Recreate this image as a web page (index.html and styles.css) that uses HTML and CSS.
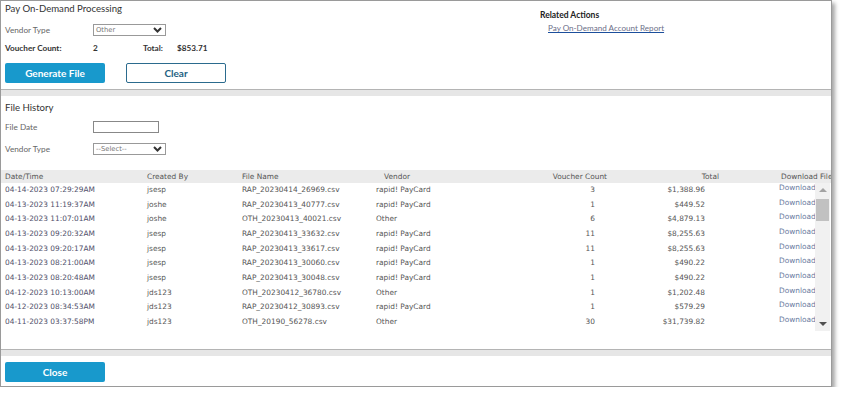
FILE: index.html
```html
<!DOCTYPE html>
<html lang="en">
<head>
  <meta charset="UTF-8">
  <title>Pay On-Demand Processing</title>
  <link rel="stylesheet" href="styles.css">
</head>
<body>

  <div class="dialog">

    <!-- Processing -->
    <section class="panel top">
      <div class="process">
        <h2 class="title">Pay On-Demand Processing</h2>
        <div class="field">
          <label>Vendor Type</label>
          <div class="select">
            <span>Other</span>
            <svg class="chev" width="9" height="6" viewBox="0 0 9 6"><path d="M1 1 L4.5 4.5 L8 1" fill="none" stroke="#333" stroke-width="2"/></svg>
          </div>
        </div>
        <div class="summary">
          <span class="sum-label">Voucher Count:</span>
          <span class="sum-count">2</span>
          <span class="sum-label total-label">Total:</span>
          <span class="sum-value">$853.71</span>
        </div>
        <div class="actions">
          <button class="btn primary">Generate File</button>
          <button class="btn outline">Clear</button>
        </div>
      </div>
      <div class="related">
        <h3>Related Actions</h3>
        <a href="#">Pay On-Demand Account Report</a>
      </div>
    </section>

    <div class="divider"></div>

    <!-- File History -->
    <section class="panel history">
      <h2 class="title">File History</h2>
      <div class="field">
        <label>File Date</label>
        <div class="input"></div>
      </div>
      <div class="field">
        <label>Vendor Type</label>
        <div class="select">
          <span>--Select--</span>
          <svg class="chev" width="9" height="6" viewBox="0 0 9 6"><path d="M1 1 L4.5 4.5 L8 1" fill="none" stroke="#333" stroke-width="2"/></svg>
        </div>
      </div>

      <div class="grid-head">
        <div class="c-date">Date/Time</div>
        <div class="c-user">Created By</div>
        <div class="c-file">File Name</div>
        <div class="c-vendor h-vendor">Vendor</div>
        <div class="c-count h-count">Voucher Count</div>
        <div class="c-total h-total">Total</div>
        <div class="c-dl h-dl">Download File</div>
      </div>

      <div class="grid-body">
        <div class="rows" id="rows"></div>
        <div class="scrollbar">
          <div class="arrow up"></div>
          <div class="thumb"></div>
          <div class="track"></div>
          <div class="arrow down"></div>
        </div>
      </div>
    </section>

    <div class="divider"></div>

    <footer class="footer">
      <button class="btn primary">Close</button>
    </footer>
  </div>

  <script>
    const files = [
      ['04-14-2023 07:29:29AM', 'jsesp', 'RAP_20230414_26969.csv', 'rapid! PayCard', 3, '$1,388.96'],
      ['04-13-2023 11:19:37AM', 'joshe', 'RAP_20230413_40777.csv', 'rapid! PayCard', 1, '$449.52'],
      ['04-13-2023 11:07:01AM', 'joshe', 'OTH_20230413_40021.csv', 'Other', 6, '$4,879.13'],
      ['04-13-2023 09:20:32AM', 'jsesp', 'RAP_20230413_33632.csv', 'rapid! PayCard', 11, '$8,255.63'],
      ['04-13-2023 09:20:17AM', 'jsesp', 'RAP_20230413_33617.csv', 'rapid! PayCard', 11, '$8,255.63'],
      ['04-13-2023 08:21:00AM', 'jsesp', 'RAP_20230413_30060.csv', 'rapid! PayCard', 1, '$490.22'],
      ['04-13-2023 08:20:48AM', 'jsesp', 'RAP_20230413_30048.csv', 'rapid! PayCard', 1, '$490.22'],
      ['04-12-2023 10:13:00AM', 'jds123', 'OTH_20230412_36780.csv', 'Other', 1, '$1,202.48'],
      ['04-12-2023 08:34:53AM', 'jds123', 'RAP_20230412_30893.csv', 'rapid! PayCard', 1, '$579.29'],
      ['04-11-2023 03:37:58PM', 'jds123', 'OTH_20190_56278.csv', 'Other', 30, '$31,739.82']
    ];

    const rows = document.getElementById('rows');
    files.forEach(f => {
      const row = document.createElement('div');
      row.className = 'row';
      row.innerHTML = `
        <div class="c-date">${f[0]}</div>
        <div class="c-user">${f[1]}</div>
        <div class="c-file">${f[2]}</div>
        <div class="c-vendor">${f[3]}</div>
        <div class="c-count">${f[4]}</div>
        <div class="c-total">${f[5]}</div>
        <div class="c-dl"><a href="#">Download</a></div>
      `;
      rows.appendChild(row);
    });
  </script>
</body>
</html>
```

FILE: styles.css
```css
body {
  margin: 0;
  background: #fff;
  font-family: Lato, 'Open Sans', sans-serif;
  color: #333;
}
.dialog {
  width: 830px;
  height: 385px;
  border: 1px solid #9a9a9a;
  box-shadow: 3px 3px 4px rgba(0,0,0,0.35);
  background: #fff;
  display: flex;
  flex-direction: column;
  overflow: hidden;
}
.divider {
  height: 6px;
  border-top: 1px solid #b4b4b4;
  background: #e6e6e6;
  flex: none;
}
.panel {
  padding: 0 4px;
}
.top {
  height: 88px;
  display: flex;
  flex: none;
}
.process {
  width: 535px;
}
.title {
  margin: 0;
  font-size: 9.6px;
  font-weight: normal;
  line-height: 14px;
  color: #333;
}
.top .title {
  margin-top: 1px;
}
.field {
  display: flex;
  align-items: center;
  height: 12px;
}
.top .field {
  margin-top: 8px;
}
.field label {
  width: 88px;
  font-size: 8.2px;
  color: #666;
}
.select {
  width: 67px;
  height: 10px;
  border: 1px solid #999;
  display: flex;
  align-items: center;
  justify-content: space-between;
  padding: 0 2px 0 2px;
  font-family: 'DejaVu Sans', Verdana, sans-serif;
  font-size: 6.8px;
  color: #777;
}
.select .chev {
  margin-right: 1px;
}
.input {
  width: 64px;
  height: 10px;
  border: 1px solid #888;
}
.summary {
  display: flex;
  align-items: center;
  margin-top: 7px;
  font-size: 8.2px;
  font-weight: bold;
  line-height: 11px;
}
.sum-label {
  width: 88px;
  color: #333;
}
.sum-count {
  width: 50px;
}
.total-label {
  width: 34px;
}
.actions {
  display: flex;
  gap: 21px;
  margin-top: 9px;
}
.btn {
  width: 100px;
  height: 20px;
  border-radius: 2px;
  font-family: inherit;
  font-size: 10px;
  font-weight: bold;
  cursor: pointer;
  padding: 0;
}
.btn.primary {
  background: #1899cc;
  border: none;
  color: #fff;
}
.btn.outline {
  background: #fff;
  border: 1px solid #2b6b8e;
  color: #245f82;
}
.related {
  padding-top: 9px;
}
.related h3 {
  margin: 0;
  font-size: 8.5px;
  font-weight: bold;
  line-height: 11px;
  color: #222;
}
.related a {
  display: block;
  margin: 2px 0 0 8px;
  font-size: 8.1px;
  line-height: 11px;
  color: #6c6f89;
  text-decoration: underline;
  text-decoration-color: #1c4f9c;
}
.history {
  height: 253px;
  flex: none;
  padding: 0;
}
.history .title {
  margin: 5px 0 0 4px;
}
.history .field {
  padding-left: 4px;
  margin-top: 6px;
}
.history .field + .field {
  margin-top: 10px;
}
.grid-head, .row {
  display: grid;
  grid-template-columns: 141px 95px 134px 109px 132px 112px 91px;
  font-family: 'DejaVu Sans', Verdana, sans-serif;
  font-size: 7.4px;
  white-space: nowrap;
}
.grid-head {
  margin-top: 15px;
  height: 13px;
  line-height: 13px;
  background: #ebebeb;
  color: #555;
  grid-template-columns: 141px 95px 134px 109px 132px 112px 1fr;
  overflow: hidden;
}
.grid-body {
  display: flex;
  height: 148px;
}
.rows {
  width: 814px;
}
.row {
  height: 14.67px;
  line-height: 14.67px;
  color: #555;
}
.c-date { padding-left: 4px; color: #50506a; }
.c-user { padding-left: 5px; }
.c-file { padding-left: 5px; }
.c-vendor { padding-left: 5px; }
.c-count { text-align: right; padding-right: 17px; }
.c-total { text-align: right; padding-right: 19px; }
.c-dl { padding-left: 55px; overflow: hidden; }
.grid-head .c-date { color: #555; }
.h-vendor { padding-left: 13px; }
.h-count { padding-right: 5px; }
.h-total { padding-right: 5px; }
.h-dl { padding-left: 57px; }
.c-dl a {
  color: #6a7ba0;
  text-decoration: none;
  position: relative;
  top: -2px;
}
.scrollbar {
  width: 15px;
  background: #f1f1f1;
  display: flex;
  flex-direction: column;
}
.arrow {
  height: 15px;
  position: relative;
}
.arrow::after {
  content: '';
  position: absolute;
  left: 4px;
  border-left: 4px solid transparent;
  border-right: 4px solid transparent;
}
.arrow.up::after {
  top: 5px;
  border-bottom: 4px solid #a3a3a3;
}
.arrow.down::after {
  top: 6px;
  border-top: 4px solid #505050;
}
.thumb {
  height: 22px;
  margin: 1px 1px 0 1px;
  background: #c1c1c1;
}
.track {
  flex: 1;
}
.footer {
  flex: 1;
  display: flex;
  align-items: flex-start;
  padding: 6px 4px;
}
```
